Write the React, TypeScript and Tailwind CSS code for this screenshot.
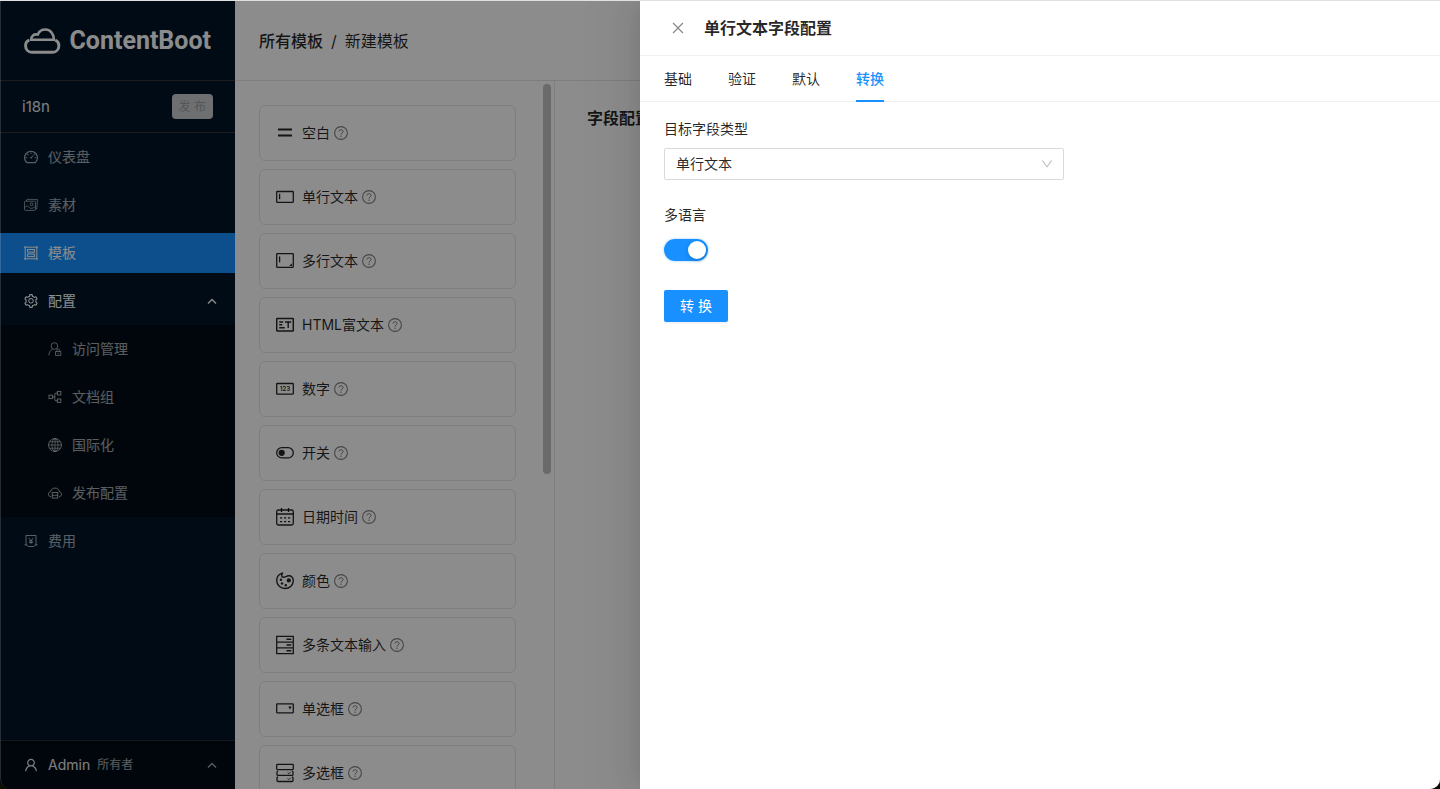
import { useState } from "react";
import type { ReactNode } from "react";
import {
  AiOutlineClose,
  AiOutlineDashboard,
  AiOutlineDown,
  AiOutlineSetting,
  AiOutlineUser,
} from "react-icons/ai";

function MenuIcon({ children }: { children: ReactNode }) {
  return (
    <svg
      viewBox="0 0 14 14"
      className="h-3.5 w-3.5 shrink-0"
      fill="none"
      stroke="currentColor"
      aria-hidden="true"
    >
      {children}
    </svg>
  );
}

function FieldIcon({ children }: { children: ReactNode }) {
  return (
    <svg
      viewBox="0 0 18 20"
      className="h-5 w-[18px] shrink-0"
      fill="none"
      stroke="currentColor"
      strokeWidth="1.3"
      aria-hidden="true"
    >
      {children}
    </svg>
  );
}

function HelpIcon() {
  return (
    <svg
      viewBox="0 0 14 14"
      className="ml-1 h-3.5 w-3.5 text-black/50"
      fill="none"
      stroke="currentColor"
      aria-hidden="true"
    >
      <circle cx="7" cy="7" r="6.4" strokeWidth="1.1" />
      <path d="M5 5.500c0-2.400 4-2.400 4 0C9 7 7 6.900 7 8.600" />
      <circle cx="7" cy="10.300" r="0.700" fill="currentColor" stroke="none" />
    </svg>
  );
}

function CaretUp() {
  return (
    <svg
      viewBox="0 0 10 10"
      className="ml-auto h-2.5 w-2.5"
      fill="none"
      stroke="currentColor"
      strokeWidth="1.4"
      aria-hidden="true"
    >
      <path d="M1 7.500 5 3.500l4 4" />
    </svg>
  );
}

const topMenu = [
  {
    label: "仪表盘",
    icon: <AiOutlineDashboard className="-mx-px h-4 w-4" />,
    active: false,
  },
  {
    label: "素材",
    icon: (
      <MenuIcon>
        <path d="M2.2 3.2 3 1.3l10.5.3-.7 9.2-1.3.4" strokeWidth="0.8" />
        <rect x="0.5" y="3.2" width="11" height="9.2" rx="1.2" strokeWidth="0.8" />
        <circle cx="7.6" cy="6.3" r="1.4" strokeWidth="0.8" />
        <path d="M.6 9.6c2-2.2 3.2-1.8 4.6-.3 1.5 1.5 2.8 1.6 6.2-.7" strokeWidth="0.8" />
      </MenuIcon>
    ),
    active: false,
  },
  {
    label: "模板",
    icon: (
      <MenuIcon>
        <path d="M0 1.2h14M0 12.8h14M1.2 0v14M12.8 0v14" />
        <rect x="3.6" y="3.5" width="6.8" height="2.6" />
        <rect x="3.6" y="8" width="6.8" height="2.6" />
      </MenuIcon>
    ),
    active: true,
  },
];

const configMenu = [
  {
    label: "访问管理",
    icon: (
      <MenuIcon>
        <circle cx="6.4" cy="4" r="3.3" strokeWidth="0.9" />
        <path d="M.9 13.4c0-3 1.3-5 3.6-6.2" strokeWidth="0.9" />
        <rect x="7.6" y="9.6" width="5.2" height="3.8" strokeWidth="0.9" />
        <path d="M8.8 9.6V8.4a1.4 1.4 0 0 1 2.8 0v1.2M10.2 11v1.2" strokeWidth="0.9" />
      </MenuIcon>
    ),
  },
  {
    label: "文档组",
    icon: (
      <MenuIcon>
        <rect x="1" y="5.2" width="3.4" height="3.4" />
        <rect x="9.4" y="1.5" width="3.4" height="3.4" />
        <rect x="9.4" y="9" width="3.4" height="3.4" />
        <path d="M4.4 7h2.4M9.4 3.2H7.9q-1.1 0-1.1 1.1v5.4q0 1.1 1.1 1.1h1.5" />
      </MenuIcon>
    ),
  },
  {
    label: "国际化",
    icon: (
      <MenuIcon>
        <circle cx="7" cy="7" r="6.4" />
        <ellipse cx="7" cy="7" rx="3" ry="6.4" strokeWidth="0.8" />
        <path d="M7 .6v12.8M.6 7h12.8M1.6 3.8h10.8M1.6 10.2h10.8" strokeWidth="0.8" />
      </MenuIcon>
    ),
  },
  {
    label: "发布配置",
    icon: (
      <MenuIcon>
        <path d="M3 10.800C-.4 10.400-.2 6.100 2.500 5.800 3.400.8 10.600.8 11.500 5.800c2.700.3 2.900 4.600-.5 5" />
        <rect x="4.300" y="6.500" width="5.400" height="5.600" />
        <path d="M4.300 9.300h5.400" strokeWidth="0.900" />
      </MenuIcon>
    ),
  },
];

const fields = [
  {
    label: "空白",
    icon: <path d="M2 6.500h14M2 12.500h14" strokeWidth="1.800" />,
  },
  {
    label: "单行文本",
    icon: (
      <>
        <rect x="0.700" y="4.500" width="16.600" height="10.800" rx="0.500" />
        <path d="M3.600 6.700v5.600" />
      </>
    ),
  },
  {
    label: "多行文本",
    icon: (
      <>
        <rect x="0.700" y="2.700" width="16.600" height="13.600" rx="0.500" />
        <path d="M3.600 5.400v6" />
        <path d="M16 12.200v2.800h-2.800z" fill="currentColor" stroke="none" />
      </>
    ),
  },
  {
    label: "HTML富文本",
    icon: (
      <>
        <rect x="0.700" y="3.500" width="16.600" height="12.400" rx="0.600" strokeWidth="1.500" />
        <path d="M3.200 7h4M3.200 9.800h3M3.200 12.700h5.600M9 7h6.200M12.200 7v6" strokeWidth="1.400" />
      </>
    ),
  },
  {
    label: "数字",
    icon: (
      <>
        <rect x="0.700" y="4.500" width="16.600" height="10.600" rx="0.500" />
        <text
          x="9"
          y="12.200"
          textAnchor="middle"
          fontSize="6.400"
          fontWeight="600"
          fill="currentColor"
          stroke="none"
        >
          123
        </text>
      </>
    ),
  },
  {
    label: "开关",
    icon: (
      <>
        <rect x="0.700" y="4.700" width="16.600" height="10.200" rx="5.100" />
        <circle cx="5.700" cy="9.800" r="3.100" fill="currentColor" stroke="none" />
      </>
    ),
  },
  {
    label: "日期时间",
    icon: (
      <>
        <rect x="0.700" y="3" width="16.600" height="15" rx="1.800" />
        <path d="M.7 7h16.600M5.500 1v4M12.500 1v4" />
        <path d="M4 10.800h2.200M8 10.800h2.200M12 10.800h2.200M4 14.600h2.200M8 14.600h2.200M12 14.600h2.200" />
      </>
    ),
  },
  {
    label: "颜色",
    icon: (
      <>
        <path
          d="M5.700 2.300C2.400 3.600.7 6.200.7 9.500c0 4.600 3.900 8 8.300 8 4.800 0 8.300-3.500 8.300-8 0-3-2-4.900-4.700-4.700-2.300.2-3.600 1.600-5.400 1.400-1.600-.2-2-1.500-.8-3.900z"
          strokeWidth="1.400"
        />
        <g fill="currentColor" stroke="none">
          <circle cx="12.800" cy="9.400" r="2.100" />
          <circle cx="4.900" cy="8.800" r="1.200" />
          <circle cx="6" cy="12.500" r="1.200" />
          <circle cx="9.800" cy="14.200" r="1.200" />
        </g>
      </>
    ),
  },
  {
    label: "多条文本输入",
    icon: (
      <>
        <path d="M.7 1.300h16.600v17.400H.7zM.7 7.100h16.600M.7 12.900h16.600" />
        <path d="M10.500 4.300h4.800M10.500 10h4.800M10.500 15.700h4.800" strokeWidth="1.600" />
      </>
    ),
  },
  {
    label: "单选框",
    icon: (
      <>
        <rect x="0.700" y="4.800" width="16.600" height="9" rx="0.500" />
        <path d="M12.300 7.600h3.400l-1.700 3z" fill="currentColor" stroke="none" />
      </>
    ),
  },
  {
    label: "多选框",
    icon: (
      <>
        <rect x="0.700" y="1.300" width="16.600" height="5.300" rx="0.800" />
        <path d="M2 8.200q-1 .2-1 1v2.200q0 1 1 1h14q1 0 1-1V9.200q0-.8-1-1M2 14q-1 .2-1 1v2.500q0 1 1 1h14q1 0 1-1V15q0-.8-1-1" />
        <path d="m11.600 9.500 1.200 1.200 2-2M11.600 15.400l1.200 1.200 2-2" strokeWidth="0.900" />
      </>
    ),
  },
];

const tabs = ["基础", "验证", "默认", "转换"];

function Logo() {
  return (
    <a href="#" className="flex h-20 items-center gap-2 border-b border-[#383433] px-6 text-white">
      <svg
        viewBox="0 0 38 28"
        className="h-7 w-[38px]"
        fill="none"
        stroke="currentColor"
        strokeWidth="3"
        aria-hidden="true"
      >
        <path d="M5.500 13.200C3 14 1.600 16 1.600 18.700c0 4 3 6.800 7 6.800h19.800c4 0 7-2.800 7-6.800 0-2.500-1.300-4.500-3.600-5.500" />
        <path
          d="M7.300 12.700h23.200C30.300 6.500 26.500 2.300 21.800 2.300c-3.800 0-6.600 2-7.800 5.200C10 6.600 7.300 8.800 7.300 12.700z"
          strokeWidth="2.600"
        />
      </svg>
      <span className="text-[25px] font-bold font-['Roboto',sans-serif]">ContentBoot</span>
    </a>
  );
}

function Sidebar() {
  return (
    <aside className="flex w-[235px] shrink-0 flex-col bg-[#001529] text-white/65">
      <Logo />
      <div className="flex h-13 items-center justify-between border-b border-[#383433] px-[22px]">
        <span className="text-[15px] text-white/90">i18n</span>
        <button disabled className="h-[25px] rounded-sm bg-[#c8cacd] px-[7px] text-xs text-[#9c9ea1]">
          发 布
        </button>
      </div>
      <nav className="flex-1">
        {topMenu.map((item) => (
          <a
            key={item.label}
            href="#"
            className={`my-1 mb-2 flex h-10 items-center gap-2.5 px-6 ${item.active ? "bg-[#1890ff] text-white" : ""}`}
          >
            {item.icon}
            {item.label}
          </a>
        ))}
        <button className="flex h-10 w-full items-center gap-2.5 pr-[18px] pl-6 text-white">
          <AiOutlineSetting className="-mx-px h-4 w-4" />
          配置
          <CaretUp />
        </button>
        <div className="mt-1 bg-[#000c17] py-1">
          {configMenu.map((item) => (
            <a key={item.label} href="#" className="mb-2 flex h-10 items-center gap-2.5 pl-12 last:mb-0">
              {item.icon}
              {item.label}
            </a>
          ))}
        </div>
        <a href="#" className="mt-1 flex h-10 items-center gap-2.5 px-6">
          <MenuIcon>
            <path d="M2 11V1.500h10V11M.5 10.900h2.300c.3 1.100 1 1.600 2 1.600h4.400c1 0 1.700-.5 2-1.600h2.300" />
            <path d="m4.900 3.800 2.100 3 2.100-3M7 6.800v3M5 7h4M5 8.500h4" strokeWidth="0.900" />
          </MenuIcon>
          费用
        </a>
      </nav>
      <button className="flex h-[49px] items-center border-t border-[#2a2a2a] bg-[#000c17] pr-[18px] pl-6">
        <AiOutlineUser className="-mx-px h-4 w-4 text-white/90" />
        <span className="ml-2.5 text-white/90">Admin</span>
        <span className="ml-[7px] text-xs">所有者</span>
        <CaretUp />
      </button>
    </aside>
  );
}

function TemplateEditor() {
  return (
    <main className="flex min-w-0 flex-1 flex-col bg-white text-black/85">
      <header className="flex h-20 shrink-0 items-center gap-2 border-b border-[#e4e4e4] px-6 text-base">
        <a href="#" className="font-medium">
          所有模板
        </a>
        <span>/</span>
        <span>新建模板</span>
      </header>
      <div className="flex min-h-0 flex-1">
        <div className="relative w-80 shrink-0 overflow-hidden border-r border-[#e8e8e8] pt-6 pr-[38px] pl-6">
          <ul className="space-y-2">
            {fields.map((field) => (
              <li
                key={field.label}
                className="flex h-14 items-center rounded-md border border-[#e6e6e6] px-4"
              >
                <FieldIcon>{field.icon}</FieldIcon>
                <span className="ml-2">{field.label}</span>
                <HelpIcon />
              </li>
            ))}
          </ul>
          <div className="absolute top-[3px] right-[3px] h-[390px] w-2 rounded-full bg-[#c1c1c1]" />
        </div>
        <section className="flex-1 px-8 pt-6">
          <h2 className="text-base leading-[26px] font-semibold">字段配置</h2>
        </section>
      </div>
    </main>
  );
}

function FieldDrawer() {
  const [activeTab, setActiveTab] = useState("转换");
  const [multiLang, setMultiLang] = useState(true);

  return (
    <div
      role="dialog"
      aria-labelledby="drawer-title"
      className="absolute inset-y-0 right-0 w-[800px] max-w-full bg-white text-black/85 shadow-[-6px_0_16px_-8px_rgba(0,0,0,0.08),-9px_0_28px_rgba(0,0,0,0.05),-12px_0_48px_16px_rgba(0,0,0,0.03)]"
    >
      <header className="flex h-[55px] items-center gap-[18px] border-b border-[#f0f0f0] pl-[30px]">
        <button aria-label="关闭" className="text-black/45">
          <AiOutlineClose className="h-4 w-4" />
        </button>
        <h1 id="drawer-title" className="text-base font-semibold">
          单行文本字段配置
        </h1>
      </header>
      <div role="tablist" className="flex h-[46px] gap-9 border-b border-[#f0f0f0] px-6">
        {tabs.map((tab) => (
          <button
            key={tab}
            role="tab"
            aria-selected={tab === activeTab}
            onClick={() => setActiveTab(tab)}
            className={`-mb-px border-b-2 pt-0.5 ${
              tab === activeTab ? "border-[#1890ff] font-medium text-[#1890ff]" : "border-transparent"
            }`}
          >
            {tab}
          </button>
        ))}
      </div>
      <form className="px-6 pt-4" onSubmit={(e) => e.preventDefault()}>
        <label htmlFor="target-type" className="mb-2 block">
          目标字段类型
        </label>
        <div className="relative mb-6 max-w-[400px]">
          <select
            id="target-type"
            className="block h-8 w-full appearance-none rounded-xs border border-[#d9d9d9] bg-white px-[11px]"
          >
            {fields.slice(1).map((field) => (
              <option key={field.label}>{field.label}</option>
            ))}
          </select>
          <AiOutlineDown className="pointer-events-none absolute top-[9px] right-2.5 h-3.5 w-3.5 text-black/25" />
        </div>
        <label htmlFor="multi-lang" className="mb-2 block">
          多语言
        </label>
        <div className="mb-6 flex h-8 items-center">
          <input
            id="multi-lang"
            type="checkbox"
            role="switch"
            checked={multiLang}
            onChange={(e) => setMultiLang(e.target.checked)}
            className="h-[22px] w-11 appearance-none rounded-full bg-black/25 p-0.5 shadow-[0_0_2px_1px_rgba(24,144,255,0.2)] before:block before:h-[18px] before:w-[18px] before:rounded-full before:bg-white before:shadow-[0_2px_4px_rgba(0,35,11,0.2)] checked:bg-[#1890ff] checked:before:ml-auto"
          />
        </div>
        <button
          type="submit"
          className="h-8 w-16 rounded-xs bg-[#1890ff] text-white shadow-[0_2px_0_rgba(0,0,0,0.045)]"
        >
          转 换
        </button>
      </form>
    </div>
  );
}

export default function App() {
  return (
    <div className="h-screen bg-[#0d0d05] text-sm leading-[22px] font-['Inter','Noto_Sans_CJK_SC',sans-serif]">
      <div className="relative flex h-full overflow-hidden rounded-b-[10px] border-t border-[#dfe1df]">
        <Sidebar />
        <TemplateEditor />
        <div className="absolute inset-0 bg-black/45" />
        <FieldDrawer />
        <div className="pointer-events-none absolute inset-0 rounded-b-[10px] border-l border-white/15" />
      </div>
    </div>
  );
}
